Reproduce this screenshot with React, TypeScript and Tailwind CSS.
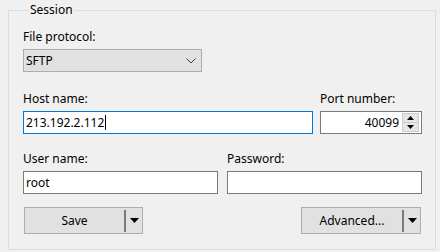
import React from "react";

const FONT = { fontFamily: '"Noto Sans", "Liberation Sans", sans-serif' };

function SplitButton({ label, width }: { label: string; width: string }) {
  return (
    <button
      type="button"
      className={`flex h-[27px] items-center border border-[#adadad] bg-[#e1e1e1] text-[12px] text-black ${width}`}
    >
      <span className="flex-1 text-center leading-[15px]">{label}</span>
      <span className="h-[22px] w-[2px] bg-[#7a7a7a]" />
      <span className="flex w-[16px] items-center justify-center">
        <svg width="9" height="5" viewBox="0 0 9 5">
          <path d="M0 0 H9 L4.5 5 Z" fill="#000" />
        </svg>
      </span>
    </button>
  );
}

export default function App() {
  return (
    <div
      className="h-[252px] w-[440px] bg-[#f0f0f0] pl-[8px] pr-[4px] pt-[2px] text-[12px] text-black"
      style={FONT}
    >
      <fieldset className="h-[248px] border border-[#dcdcdc] pb-0 pl-[14px] pr-[13px]">
        <legend className="ml-[6px] px-[1px] leading-[16px]">Session</legend>

        {/* protocol */}
        <div className="mt-[11px] leading-[15px]">File protocol:</div>
        <div className="mt-[5px] flex h-[23px] w-[179px] items-center border border-[#adadad] bg-[#e1e1e1] pl-[2px] pr-[5px]">
          <span className="flex-1 leading-[15px]">SFTP</span>
          <svg width="10" height="6" viewBox="0 0 10 6">
            <path d="M0.5 0.5 L5 5 L9.5 0.5" fill="none" stroke="#404040" strokeWidth="1" />
          </svg>
        </div>

        {/* host + port */}
        <div className="mt-[19px] flex gap-[7px]">
          <div className="flex flex-1 flex-col">
            <div className="leading-[15px]">Host name:</div>
            <div className="mt-[5px] flex h-[23px] items-center border border-[#0078d7] bg-white pl-[2px]">
              <span className="leading-[15px]">213.192.2.112</span>
              <span className="ml-[1px] h-[15px] w-[1px] bg-black" />
            </div>
          </div>
          <div className="flex w-[102px] flex-col">
            <div className="leading-[15px]">Port number:</div>
            <div className="mt-[5px] flex h-[23px] items-center border border-[#7a7a7a] bg-white pr-[2px]">
              <span className="flex-1 pr-[3px] text-right leading-[15px]">40099</span>
              <div className="flex h-[19px] w-[17px] flex-col">
                <div className="flex flex-1 items-center justify-center border border-[#cccccc] bg-[#e6e6e6]">
                  <svg width="7" height="4" viewBox="0 0 7 4">
                    <path d="M0 4 H7 L3.5 0 Z" fill="#000" />
                  </svg>
                </div>
                <div className="flex flex-1 items-center justify-center border border-t-0 border-[#cccccc] bg-[#e6e6e6]">
                  <svg width="7" height="4" viewBox="0 0 7 4">
                    <path d="M0 0 H7 L3.5 4 Z" fill="#000" />
                  </svg>
                </div>
              </div>
            </div>
          </div>
        </div>

        {/* user + password */}
        <div className="mt-[17px] flex gap-[9px]">
          <div className="flex w-[195px] flex-col">
            <div className="leading-[15px]">User name:</div>
            <div className="mt-[5px] flex h-[23px] items-center border border-[#7a7a7a] bg-white pl-[2px]">
              <span className="leading-[15px]">root</span>
            </div>
          </div>
          <div className="flex flex-1 flex-col">
            <div className="leading-[15px]">Password:</div>
            <div className="mt-[5px] h-[23px] border border-[#7a7a7a] bg-white" />
          </div>
        </div>

        {/* buttons */}
        <div className="mt-[13px] flex justify-between pl-[1px] pr-[1px]">
          <SplitButton label="Save" width="w-[119px]" />
          <SplitButton label="Advanced..." width="w-[120px]" />
        </div>
      </fieldset>
    </div>
  );
}
